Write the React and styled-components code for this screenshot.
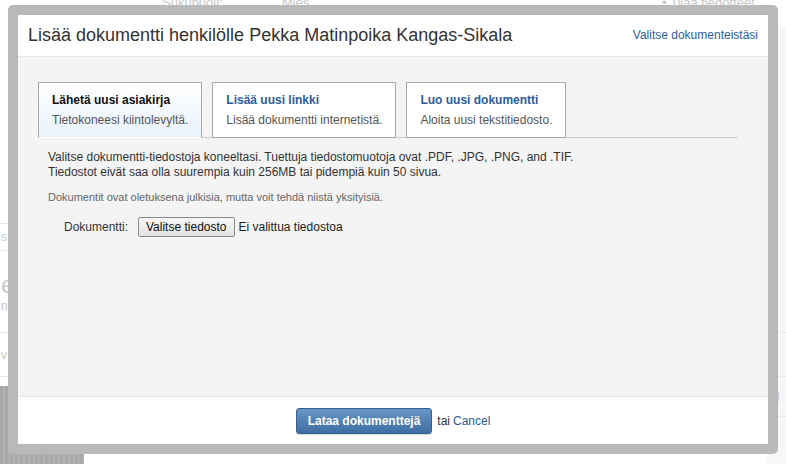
import React from "react";
import styled, { createGlobalStyle } from "styled-components";

const GlobalStyle = createGlobalStyle`
  body {
    margin: 0;
    font-family: "Liberation Sans", Arial, sans-serif;
    background: #fff;
  }
`;

const tabs = [
  { title: "Lähetä uusi asiakirja", sub: "Tietokoneesi kiintolevyltä.", active: true },
  { title: "Lisää uusi linkki", sub: "Lisää dokumentti internetistä." },
  { title: "Luo uusi dokumentti", sub: "Aloita uusi tekstitiedosto." },
];

export default function App() {
  return (
    <>
      <GlobalStyle />
      <Page>
        <Backdrop>
          <TopStrip>
            <Faint $w={120}>Sukupuoli:</Faint>
            <Faint $w={380}>Mies</Faint>
            <Faint $w={0}>• Tilaa tiedotteet</Faint>
          </TopStrip>
          <BackMain>
            <LeftRail>
              <RailRow $h={219} />
              <RailRow $h={27}><RailText $blue>s</RailText></RailRow>
              <RailRow $h={82} $col>
                <RailBig>e</RailBig>
                <RailText>nt</RailText>
              </RailRow>
              <RailRow $h={44}><RailText>v</RailText></RailRow>
              <Gap />
              <Photo />
            </LeftRail>
            <RightRail>
              <RailRow $h={328} $end><RailText>is</RailText></RailRow>
              <RailRow $h={44} />
              <RailRow $h={40}><RailText>mi</RailText></RailRow>
            </RightRail>
          </BackMain>
        </Backdrop>

        <Modal>
          <Inner>
            <Header>
              <Title>Lisää dokumentti henkilölle Pekka Matinpoika Kangas-Sikala</Title>
              <Link href="#">Valitse dokumenteistäsi</Link>
            </Header>
            <Body>
              <TabBar>
                {tabs.map((t) => (
                  <Tab key={t.title} $active={t.active}>
                    <TabTitle $active={t.active}>{t.title}</TabTitle>
                    <TabSub>{t.sub}</TabSub>
                  </Tab>
                ))}
              </TabBar>
              <Content>
                <Info>
                  Valitse dokumentti-tiedostoja koneeltasi. Tuettuja tiedostomuotoja ovat .PDF, .JPG, .PNG, and .TIF.
                  <br />
                  Tiedostot eivät saa olla suurempia kuin 256MB tai pidempiä kuin 50 sivua.
                </Info>
                <Note>Dokumentit ovat oletuksena julkisia, mutta voit tehdä niistä yksityisiä.</Note>
                <Field>
                  <Label>Dokumentti:</Label>
                  <FileButton type="button">Valitse tiedosto</FileButton>
                  <FileName>Ei valittua tiedostoa</FileName>
                </Field>
              </Content>
            </Body>
            <Footer>
              <Primary type="button">Lataa dokumenttejä</Primary>
              <Or>tai</Or>
              <Link href="#">Cancel</Link>
            </Footer>
          </Inner>
        </Modal>
      </Page>
    </>
  );
}

const Page = styled.div`
  position: relative;
  width: 786px;
  height: 464px;
  overflow: hidden;
  background: #fff;
`;

const Backdrop = styled.div`
  display: flex;
  flex-direction: column;
  height: 100%;
`;

const TopStrip = styled.div`
  display: flex;
  height: 5px;
  padding-left: 162px;
  align-items: flex-end;
  overflow: hidden;
`;

const Faint = styled.span`
  flex: 0 0 auto;
  width: ${(p) => (p.$w ? p.$w + "px" : "auto")};
  font-size: 13px;
  line-height: 13px;
  margin-bottom: -4px;
  color: #c8c8c8;
`;

const BackMain = styled.div`
  flex: 1;
  display: flex;
  justify-content: space-between;
`;

const LeftRail = styled.div`
  width: 84px;
  display: flex;
  flex-direction: column;
`;

const RightRail = styled.div`
  width: 20px;
  display: flex;
  flex-direction: column;
  background: linear-gradient(#fff 0 22px, #f7f7f7 22px);
`;

const RailRow = styled.div`
  height: ${(p) => p.$h}px;
  box-sizing: border-box;
  flex: 0 0 auto;
  border-bottom: 1px solid #e8e8e8;
  display: flex;
  flex-direction: ${(p) => (p.$col ? "column" : "row")};
  justify-content: ${(p) => (p.$col ? "center" : "flex-start")};
  align-items: ${(p) => (p.$end ? "flex-end" : p.$col ? "flex-start" : "center")};
  padding: ${(p) => (p.$end ? "0 0 36px 1px" : "0 0 0 1px")};
`;

const RailText = styled.span`
  font-size: 12px;
  color: ${(p) => (p.$blue ? "#b9cde0" : "#c4c4c4")};
`;

const RailBig = styled.span`
  font-size: 24px;
  line-height: 28px;
  color: #c8c8c8;
`;

const Gap = styled.div`
  height: 9px;
  flex: 0 0 auto;
`;

const Photo = styled.div`
  flex: 1;
  background: repeating-linear-gradient(90deg, #a8a8a8 0 3px, #b2b2b2 3px 5px);
`;

const Modal = styled.div`
  position: absolute;
  left: 8px;
  top: 5px;
  width: 770px;
  height: 449px;
  box-sizing: border-box;
  border: 10px solid #b9b9b9;
  border-radius: 5px;
  background: #b9b9b9;
`;

const Inner = styled.div`
  display: flex;
  flex-direction: column;
  height: 100%;
  background: #fff;
`;

const Header = styled.div`
  height: 42px;
  box-sizing: border-box;
  display: flex;
  align-items: center;
  justify-content: space-between;
  padding: 0 10px 1px 10px;
  border-bottom: 1px solid #e6e6e6;
`;

const Title = styled.h2`
  margin: 0;
  font-size: 18px;
  font-weight: normal;
  color: #333;
`;

const Link = styled.a`
  font-size: 12px;
  color: #2b5c9e;
  text-decoration: none;
`;

const Body = styled.div`
  flex: 1;
  background: #f4f4f4;
  padding: 25px 30px 0 20px;
`;

const TabBar = styled.div`
  display: flex;
  gap: 10px;
  border-bottom: 1px solid #cdcdcd;
`;

const Tab = styled.div`
  height: 56px;
  box-sizing: border-box;
  padding: 9px 13px 0 13px;
  margin-bottom: -1px;
  border: 1px solid #a9a9a9;
  border-bottom-color: ${(p) => (p.$active ? "transparent" : "#a9a9a9")};
  background: ${(p) => (p.$active ? "linear-gradient(#fff, #e9f2fc)" : "#fff")};
`;

const TabTitle = styled.div`
  font-size: 12px;
  font-weight: bold;
  line-height: 16px;
  color: ${(p) => (p.$active ? "#111" : "#2b5c9e")};
`;

const TabSub = styled.div`
  margin-top: 4px;
  font-size: 12px;
  line-height: 16px;
  color: #555;
`;

const Content = styled.div`
  padding: 12px 10px 0;
`;

const Info = styled.p`
  margin: 0;
  font-size: 12px;
  line-height: 15px;
  color: #333;
`;

const Note = styled.p`
  margin: 10px 0 0;
  font-size: 11px;
  line-height: 14px;
  color: #666;
`;

const Field = styled.div`
  display: flex;
  align-items: center;
  margin-top: 13px;
  padding-left: 16px;
  font-size: 12px;
  color: #333;
`;

const Label = styled.span`
  width: 74px;
`;

const FileButton = styled.button`
  height: 20px;
  padding: 0 7px;
  font: 12px "Liberation Sans", Arial, sans-serif;
  color: #111;
  background: linear-gradient(#f6f6f6, #e3e3e3);
  border: 1px solid #8a8a8a;
  border-radius: 2px;
`;

const FileName = styled.span`
  margin-left: 4px;
  color: #222;
`;

const Footer = styled.div`
  height: 48px;
  box-sizing: border-box;
  display: flex;
  align-items: center;
  justify-content: center;
  border-top: 1px solid #e6e6e6;
  font-size: 12px;
`;

const Primary = styled.button`
  height: 26px;
  padding: 0 11px;
  font: bold 12px "Liberation Sans", Arial, sans-serif;
  color: #fff;
  background: linear-gradient(#6795c6, #3f6ea3);
  border: 1px solid #34618f;
  border-radius: 3px;
  box-shadow: 0 1px 1px rgba(0, 0, 0, 0.15);
`;

const Or = styled.span`
  margin: 0 3px 0 5px;
  color: #333;
`;
